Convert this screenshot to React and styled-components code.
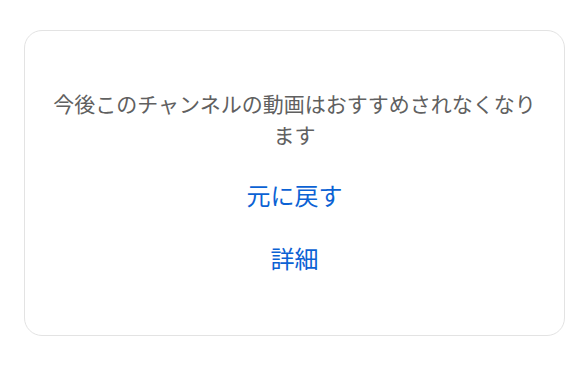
import React from "react";
import styled, { createGlobalStyle } from "styled-components";

const GlobalStyle = createGlobalStyle`
  html, body {
    margin: 0;
    padding: 0;
    background: #ffffff;
  }
  body {
    font-family: "Noto Sans CJK JP", "Noto Sans", sans-serif;
  }
`;

const Page = styled.div`
  padding: 30px 0 0 24px;
`;

const Card = styled.section`
  box-sizing: border-box;
  width: 541px;
  height: 306px;
  border: 1px solid #e3e3e3;
  border-radius: 18px;
  padding: 57px 24px 0;
  display: flex;
  flex-direction: column;
  align-items: center;
  gap: 27px;
`;

const Message = styled.p`
  margin: 0;
  font-size: 21px;
  line-height: 31px;
  color: #606060;
  text-align: center;
`;

const LinkButton = styled.button`
  border: none;
  background: none;
  padding: 0;
  font-family: inherit;
  font-size: 24px;
  line-height: 36px;
  color: #0b62d4;
  cursor: pointer;
`;

const App = () => {
  return (
    <>
      <GlobalStyle />
      <Page>
        <Card>
          <Message>
            今後このチャンネルの動画はおすすめされなくなります
          </Message>
          <LinkButton>元に戻す</LinkButton>
          <LinkButton>詳細</LinkButton>
        </Card>
      </Page>
    </>
  );
};

export default App;
